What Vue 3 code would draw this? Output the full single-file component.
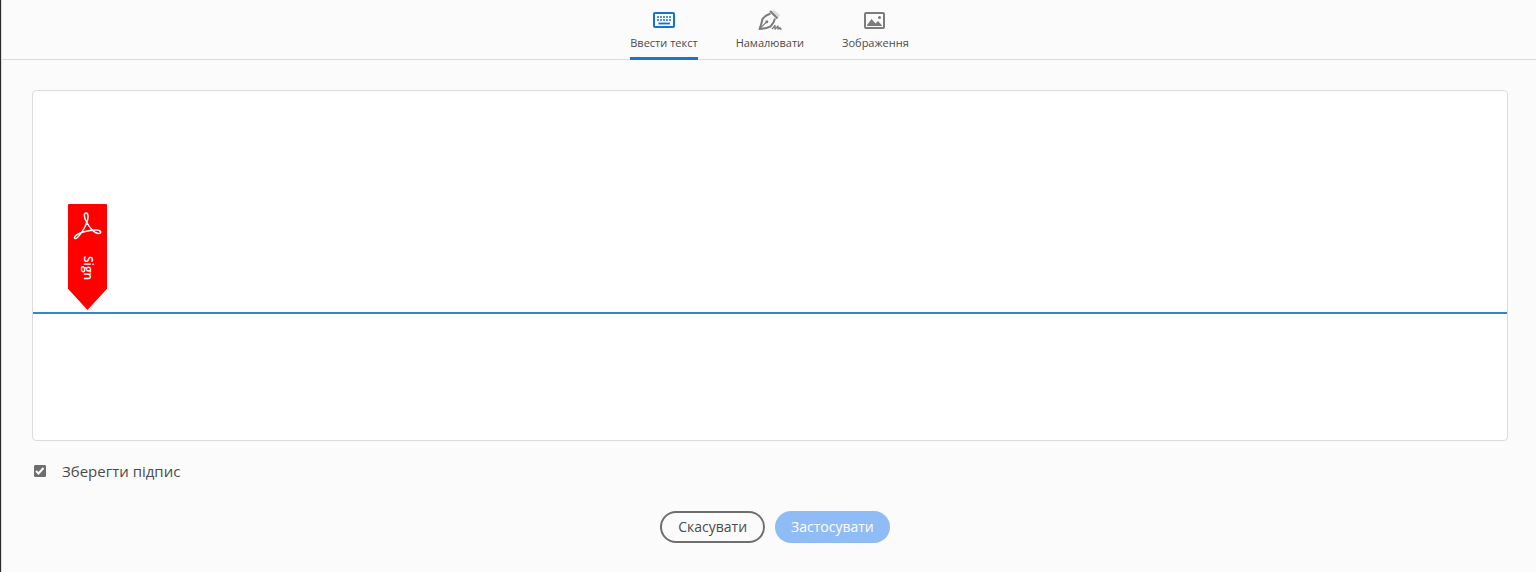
<template>
  <div class="signature-dialog">
    <nav class="tabs" role="tablist">
      <button
        v-for="tab in tabs"
        :key="tab.id"
        type="button"
        role="tab"
        class="tab"
        :class="{ active: activeTab === tab.id }"
        :aria-selected="activeTab === tab.id"
        @click="activeTab = tab.id"
      >
        <svg v-if="tab.id === 'type'" class="tab-icon" viewBox="0 0 24 20" fill="none">
          <rect x="2" y="3" width="20" height="14" rx="1" stroke="currentColor" stroke-width="2" />
          <path d="M5 7h14M5 10h14" stroke="currentColor" stroke-width="1.600" stroke-dasharray="2 1" />
          <path d="M6.500 13.500h11.500" stroke="currentColor" stroke-width="1.800" />
        </svg>
        <svg v-else-if="tab.id === 'draw'" class="tab-icon" viewBox="0 0 24 20" fill="none">
          <path d="M13 1L16 0l6 5-2.500 3.500z" fill="#dcdcdc" />
          <path d="M12 1l7.500 7.500" stroke="currentColor" stroke-width="2" />
          <path d="M12.500 3.500Q7 5.500 4.500 9Q3.500 14 1.500 19Q7.500 18.800 12.500 16.500Q16 13 17 8.500" stroke="currentColor" stroke-width="2" stroke-linejoin="round" />
          <path d="M2 18.500l6-6" stroke="currentColor" stroke-width="1.200" />
          <circle cx="8.800" cy="11.700" r="1.500" fill="currentColor" />
          <path d="M14 19.200l3-3.700v3.700l3-3.200v3l2-1.500v1.500h1.500" stroke="currentColor" stroke-width="1.300" stroke-linejoin="round" />
        </svg>
        <svg v-else class="tab-icon" viewBox="0 0 24 20" fill="none">
          <rect x="2" y="3" width="19" height="15" rx="1" stroke="currentColor" stroke-width="2" />
          <path d="M4 16v-1l4.500-6 4 4.500 2.500-2.500 4 4.500v.5z" fill="currentColor" />
          <circle cx="16.500" cy="7.500" r="1.500" fill="currentColor" />
        </svg>
        <span class="tab-label">{{ tab.label }}</span>
      </button>
    </nav>

    <main class="content">
      <div class="pad">
        <div class="sign-row">
          <div class="ribbon">
            <svg class="ribbon-logo" viewBox="0 0 29 28" fill="none" stroke="#fff" stroke-width="1.500">
              <path d="M13 1C10.500 1 11 5.500 13.500 10c3.500 6.500 8.500 11.500 12 11.500 3.500 0 3-3.500-2.500-3.500C16 18 5 20.500 2 24.500c-1.500 2 .5 3 2.500 1C9 21 15 11 15 4.500 15 2 14.500 1 13 1z" />
            </svg>
            <span class="ribbon-text">Sign</span>
          </div>
          <input v-model="signature" class="sign-input" type="text" aria-label="Ввести текст" />
        </div>
      </div>

      <label class="save">
        <input v-model="saveSignature" class="save-box" type="checkbox" />
        <span>Зберегти підпис</span>
      </label>

      <div class="actions">
        <button type="button" class="btn btn-cancel" @click="signature = ''">Скасувати</button>
        <button type="button" class="btn btn-apply" :disabled="!signature">Застосувати</button>
      </div>
    </main>
  </div>
</template>

<script setup>
import { ref } from 'vue'

const tabs = [
  { id: 'type', label: 'Ввести текст' },
  { id: 'draw', label: 'Намалювати' },
  { id: 'image', label: 'Зображення' }
]

const activeTab = ref('type')
const signature = ref('')
const saveSignature = ref(true)
</script>

<style>
body {
  margin: 0;
  background: #fbfbfb;
}
</style>

<style scoped>
.signature-dialog {
  box-sizing: border-box;
  min-height: 100vh;
  border-left: 1px solid #2b2b2f;
  box-shadow: inset 1px 0 #dcdcdc;
  background: #fbfbfb;
  color: #4b4b4b;
  font-family: "Segoe UI", "Open Sans", "Noto Sans", sans-serif;
}

.tabs {
  display: flex;
  justify-content: center;
  gap: 38px;
  padding-left: 2px;
  border-bottom: 1px solid #dcdcdc;
}

.tab {
  display: flex;
  flex-direction: column;
  align-items: center;
  height: 60px;
  margin-bottom: -1px;
  padding: 10px 0 0;
  border: 0;
  border-bottom: 3px solid transparent;
  background: none;
  color: #7c7c7c;
  font-family: inherit;
  cursor: pointer;
}

.tab.active {
  border-bottom-color: #1f73c7;
  color: #1473d0;
}

.tab-icon {
  width: 24px;
  height: 20px;
}

.tab-label {
  margin-top: 5px;
  color: #4b4b4b;
  font-size: 11px;
  line-height: 16px;
}

.content {
  padding: 30px 28px 29px 31px;
}

.pad {
  padding-bottom: 126px;
  border: 1px solid #dcdcdc;
  border-radius: 4px;
  background: #fff;
}

.sign-row {
  display: flex;
  align-items: flex-end;
  gap: 20px;
  padding: 113px 35px 2px;
  border-bottom: 2px solid #3584cb;
}

.ribbon {
  box-sizing: border-box;
  display: flex;
  flex-direction: column;
  align-items: center;
  width: 39px;
  height: 106px;
  padding-top: 8px;
  border-radius: 1px;
  background: #f00;
  clip-path: polygon(0 0, 100% 0, 100% 80%, 50% 100%, 0 80%);
}

.ribbon-logo {
  width: 29px;
  height: 28px;
}

.ribbon-text {
  margin-top: 16px;
  color: #fff;
  font-size: 12px;
  font-weight: 600;
  line-height: 16px;
  writing-mode: vertical-rl;
}

.sign-input {
  flex: 1;
  min-width: 0;
  height: 80px;
  padding: 0;
  border: 0;
  outline: 0;
  background: transparent;
  color: #000;
  font-family: inherit;
  font-size: 48px;
}

.save {
  display: flex;
  align-items: center;
  width: fit-content;
  margin-top: 20px;
  padding-left: 2px;
  gap: 16px;
  font-size: 15px;
  line-height: 20px;
}

.save-box {
  appearance: none;
  width: 12px;
  height: 12px;
  margin: 0;
  border: 1px solid #6e6e6e;
  box-sizing: border-box;
  border-radius: 1px;
  background: #fff;
}

.save-box:checked {
  background: #6e6e6e url("data:image/svg+xml,%3Csvg xmlns='http://www.w3.org/2000/svg' viewBox='0 0 10 10'%3E%3Cpath d='M1 5l2.500 2.500 5-5.500' fill='none' stroke='white' stroke-width='2'/%3E%3C/svg%3E") center / 10px 10px no-repeat;
}

.actions {
  display: flex;
  justify-content: center;
  margin-top: 30px;
}

.btn {
  height: 32px;
  margin-left: 10px;
  padding: 0 16px;
  border: 0;
  border-radius: 16px;
  font-family: inherit;
  font-size: 14px;
  line-height: 20px;
  cursor: pointer;
}

.btn-cancel {
  border: 2px solid #6e6e6e;
  background: transparent;
  color: #4b4b4b;
}

.btn-apply {
  background: #90bcf5;
  color: #fff;
}

.btn-apply:disabled {
  cursor: default;
}
</style>
